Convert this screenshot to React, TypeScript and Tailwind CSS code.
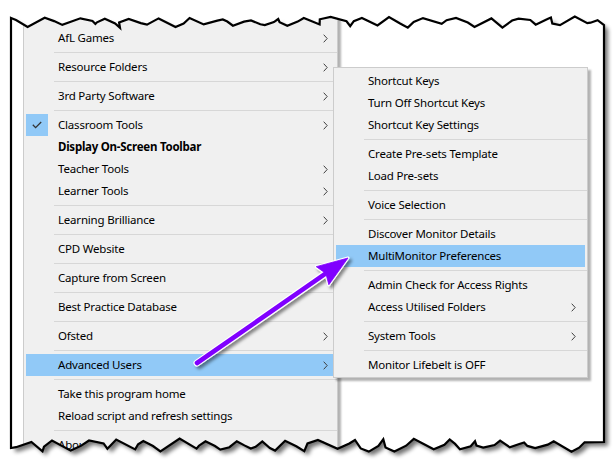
import React from "react";

type Entry =
  | { kind: "item"; label: string; sub?: boolean; bold?: boolean; checked?: boolean; hl?: boolean }
  | { kind: "sep" };

const S: Entry = { kind: "sep" };
const I = (label: string, o: Partial<{ sub: boolean; bold: boolean; checked: boolean; hl: boolean }> = {}): Entry => ({
  kind: "item",
  label,
  ...o,
});

const mainItems: Entry[] = [
  I("AfL Games", { sub: true }),
  S,
  I("Resource Folders", { sub: true }),
  S,
  I("3rd Party Software", { sub: true }),
  S,
  I("Classroom Tools", { sub: true, checked: true }),
  I("Display On-Screen Toolbar", { bold: true }),
  I("Teacher Tools", { sub: true }),
  I("Learner Tools", { sub: true }),
  S,
  I("Learning Brilliance", { sub: true }),
  S,
  I("CPD Website"),
  S,
  I("Capture from Screen"),
  S,
  I("Best Practice Database"),
  S,
  I("Ofsted", { sub: true }),
  S,
  I("Advanced Users", { sub: true, hl: true }),
  S,
  I("Take this program home"),
  I("Reload script and refresh settings"),
  S,
  I("About", { sub: true }),
];

const subItems: Entry[] = [
  I("Shortcut Keys"),
  I("Turn Off Shortcut Keys"),
  I("Shortcut Key Settings"),
  S,
  I("Create Pre-sets Template"),
  I("Load Pre-sets"),
  S,
  I("Voice Selection"),
  S,
  I("Discover Monitor Details"),
  I("MultiMonitor Preferences", { hl: true }),
  S,
  I("Admin Check for Access Rights"),
  I("Access Utilised Folders", { sub: true }),
  S,
  I("System Tools", { sub: true }),
  S,
  I("Monitor Lifebelt is OFF"),
];

function Chevron() {
  return (
    <svg width="5" height="9" viewBox="0 0 5 9" className="shrink-0">
      <polyline points="0.7,0.7 4.2,4.5 0.7,8.3" fill="none" stroke="#404040" strokeWidth="1" />
    </svg>
  );
}

function Check() {
  return (
    <svg width="10" height="8" viewBox="0 0 10 8">
      <polyline points="0.8,3.8 3.6,6.6 9.2,1" fill="none" stroke="#333" strokeWidth="1.3" />
    </svg>
  );
}

function MenuList({ items, chevronGap }: { items: Entry[]; chevronGap: string }) {
  return (
    <>
      {items.map((it, i) =>
        it.kind === "sep" ? (
          <div key={i} className="h-[7px] flex items-center ml-[28px] -mr-[2px]">
            <div className="h-px w-full bg-[#d7d7d7]" />
          </div>
        ) : (
          <div
            key={i}
            className={"h-[22px] flex items-center " + (it.hl ? "bg-[#91c9f7]" : "")}
          >
            <div className="w-[32px] h-[22px] shrink-0 flex">
              {it.checked && (
                <div className="w-[22px] h-[22px] bg-[#91c9f7] flex items-center justify-center">
                  <Check />
                </div>
              )}
            </div>
            <span
              className={
                "flex-1 whitespace-nowrap leading-[16px] " +
                (it.bold ? "font-bold tracking-[-0.25px]" : "tracking-[-0.2px]")
              }
            >
              {it.label}
            </span>
            {it.sub && (
              <div className={chevronGap}>
                <Chevron />
              </div>
            )}
          </div>
        )
      )}
    </>
  );
}

function rng(seed: number) {
  let s = seed;
  return () => {
    s = (s * 9301 + 49297) % 233280;
    return s / 233280;
  };
}

function jagPoints(x0: number, x1: number, yMin: number, yMax: number, seed: number) {
  const r = rng(seed);
  const pts: [number, number][] = [];
  let x = x0 + 5;
  let prevY = (yMin + yMax) / 2;
  let up = r() > 0.5;
  while (x < x1 - 6) {
    const y = up ? yMin + r() * 4 : yMax - r() * 5;
    const step = 8 + r() * 12;
    // small wiggle on the way
    if (r() > 0.35) {
      const wx = x - step * (0.3 + r() * 0.3);
      const wy = prevY + (y - prevY) * (0.4 + r() * 0.3) + (r() - 0.5) * 3;
      if (wx > x0 + 2) pts.push([wx, wy]);
    }
    pts.push([x, y]);
    prevY = y;
    x += step;
    up = !up;
  }
  return pts;
}

const L = 11;
const R = 604;
const topPts = jagPoints(L, R, 16.5, 28, 11);
const botPts = jagPoints(L, R, 438.5, 452, 29).reverse();
const paper =
  `M${L},18 ` +
  topPts.map(([x, y]) => `L${x.toFixed(1)},${y.toFixed(1)}`).join(" ") +
  ` L${R},25 L${R},442 ` +
  botPts.map(([x, y]) => `L${x.toFixed(1)},${y.toFixed(1)}`).join(" ") +
  ` L${L},448 Z`;
const outside = `M-20,-20 H640 V490 H-20 Z ` + paper;

function TornFrame() {
  return (
    <svg
      width="615"
      height="470"
      viewBox="0 0 615 470"
      className="absolute left-0 top-0 pointer-events-none"
    >
      <defs>
        <clipPath id="outsideClip">
          <path d={outside} clipRule="evenodd" />
        </clipPath>
        <filter id="paperBlur" x="-10%" y="-10%" width="120%" height="120%">
          <feGaussianBlur stdDeviation="2" />
        </filter>
      </defs>
      <path d={outside} fill="#ffffff" fillRule="evenodd" />
      <g clipPath="url(#outsideClip)">
        <path d={paper} fill="#000" opacity="0.55" transform="translate(4,4)" filter="url(#paperBlur)" />
      </g>
      <path d={paper} fill="none" stroke="#000" strokeWidth="2.2" strokeLinejoin="miter" />
    </svg>
  );
}

function Arrow() {
  const T = [348, 258];
  const tail = [197, 363];
  const dx = T[0] - tail[0];
  const dy = T[1] - tail[1];
  const len = Math.hypot(dx, dy);
  const u = [dx / len, dy / len];
  const n = [-u[1], u[0]];
  const Lh = 31;
  const W = 11;
  const C = [T[0] - Lh * u[0], T[1] - Lh * u[1]];
  const w1 = [C[0] + W * n[0], C[1] + W * n[1]];
  const w2 = [C[0] - W * n[0], C[1] - W * n[1]];
  const notch = [C[0] + 4 * u[0], C[1] + 4 * u[1]];
  const head = `M${T[0]},${T[1]} L${w1[0]},${w1[1]} L${notch[0]},${notch[1]} L${w2[0]},${w2[1]} Z`;
  const shaft = `M${tail[0]},${tail[1]} L${notch[0]},${notch[1]}`;
  return (
    <svg
      width="615"
      height="470"
      viewBox="0 0 615 470"
      className="absolute left-0 top-0 pointer-events-none"
    >
      <defs>
        <filter id="arrowShadow" x="-20%" y="-20%" width="140%" height="140%">
          <feDropShadow dx="2.5" dy="2.5" stdDeviation="1.6" floodColor="#000" floodOpacity="0.45" />
        </filter>
      </defs>
      <g filter="url(#arrowShadow)">
        <path d={shaft} stroke="#ffffff" strokeWidth="7" strokeLinecap="round" fill="none" />
        <path d={head} fill="#ffffff" stroke="#ffffff" strokeWidth="3" strokeLinejoin="round" />
        <path d={shaft} stroke="#8000ff" strokeWidth="4.6" strokeLinecap="round" fill="none" />
        <path d={head} fill="#8000ff" stroke="#8000ff" strokeWidth="0.8" strokeLinejoin="round" />
      </g>
    </svg>
  );
}

export default function App() {
  return (
    <div className="relative w-[615px] h-[470px] overflow-hidden bg-white text-[11.5px] text-black font-['Noto_Sans',sans-serif]">
      <div className="pl-[23px]">
        <div className="w-[315px] bg-[#f0f0f0] border border-[#cccccc] px-[2px] pt-[26px] pb-[30px] shadow-[3px_3px_2px_rgba(0,0,0,0.3)]">
          <MenuList items={mainItems} chevronGap="mr-[7px]" />
        </div>
      </div>
      <div className="absolute left-[333px] top-[67px] w-[255px] bg-[#f0f0f0] border border-[#cccccc] px-[2px] pt-[2px] pb-[1px] shadow-[3px_3px_2px_rgba(0,0,0,0.3)]">
        <MenuList items={subItems} chevronGap="mr-[9px]" />
      </div>
      <Arrow />
      <TornFrame />
    </div>
  );
}
